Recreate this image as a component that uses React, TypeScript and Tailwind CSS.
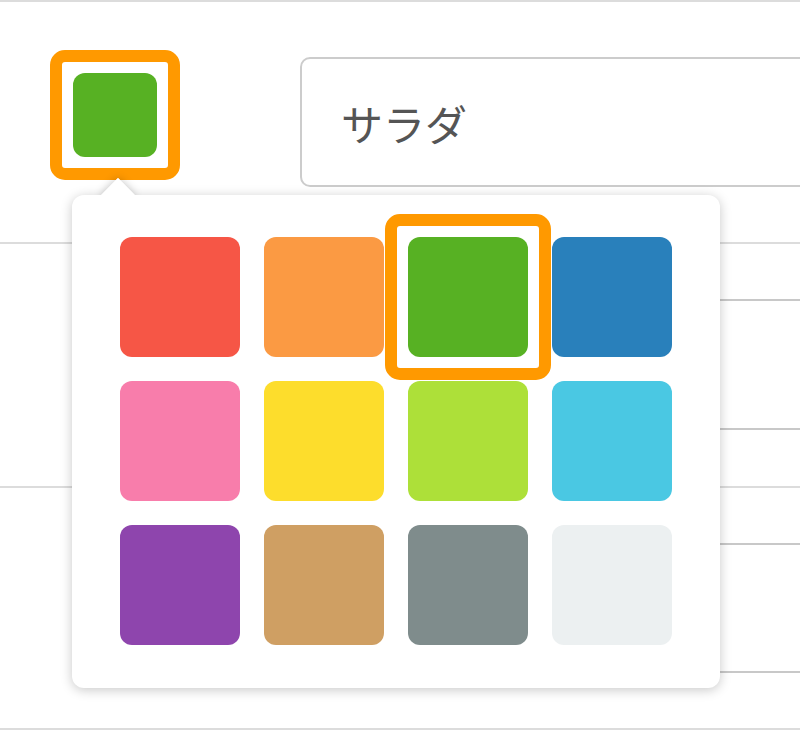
import { useState } from 'react';

const colors = [
  '#f65646', '#fb9a43', '#57b123', '#2980bb',
  '#f87dab', '#fddd2c', '#ade039', '#4ac8e3',
  '#8e45ad', '#cf9f63', '#7f8c8c', '#ecf0f1',
];

const Row = ({ height, children }: { height: string; children?: React.ReactNode }) => (
  <div className={`${height} border-t-2 border-[#dcdcdc] flex items-start`}>{children}</div>
);

const App = () => {
  const [selected, setSelected] = useState(2);
  const [name, setName] = useState('サラダ');

  return (
    <div
      className="relative w-[800px] h-[730px] overflow-hidden bg-white"
      style={{ fontFamily: '"Noto Sans CJK JP", "Noto Sans", sans-serif' }}
    >
      <Row height="h-[242px]">
        <button
          type="button"
          className="ml-[50px] mt-[48px] w-[130px] h-[130px] shrink-0 rounded-[15px] border-[12px] border-[#ff9900] bg-white flex items-center justify-center"
        >
          <span className="block w-[84px] h-[84px] rounded-[12px]" style={{ backgroundColor: colors[selected] }} />
        </button>
        <div className="ml-[120px] mt-[55px] w-[600px] h-[130px] shrink-0 rounded-[10px] border-2 border-[#cccccc] flex items-center pl-[39px]">
          <input
            value={name}
            onChange={e => setName(e.target.value)}
            className="w-full bg-transparent outline-none text-[42px] text-[#555555]"
          />
        </div>
      </Row>
      <Row height="h-[244px]">
        <div className="ml-[300px] mt-[55px] w-[600px] h-[131px] shrink-0 rounded-[10px] border-2 border-[#c8c8c8]" />
      </Row>
      <Row height="h-[242px]">
        <div className="ml-[300px] mt-[55px] w-[600px] h-[130px] shrink-0 rounded-[10px] border-2 border-[#c8c8c8]" />
      </Row>
      <div className="border-t-2 border-[#dcdcdc]" />

      {/* Colour picker popover */}
      <div className="absolute left-[72px] top-[195px] w-[648px]">
        <div className="absolute left-[34px] -top-[12px] w-[24px] h-[24px] rotate-45 bg-white shadow-[0_0_8px_rgba(0,0,0,0.25)]" />
        <div className="relative bg-white rounded-[12px] shadow-[0_2px_12px_rgba(0,0,0,0.22)] px-[48px] pt-[42px] pb-[43px]">
          <div className="absolute left-[34px] -top-[12px] w-[24px] h-[24px] rotate-45 bg-white" />
          <div className="grid grid-cols-4 gap-[24px]">
            {colors.map((c, i) => (
              <button
                key={c}
                type="button"
                onClick={() => setSelected(i)}
                className="relative w-[120px] h-[120px] rounded-[12px]"
                style={{ backgroundColor: c }}
              >
                {i === selected && (
                  <span className="absolute -inset-[23px] rounded-[15px] border-[12px] border-[#ff9900]" />
                )}
              </button>
            ))}
          </div>
        </div>
      </div>
    </div>
  );
};

export default App;
